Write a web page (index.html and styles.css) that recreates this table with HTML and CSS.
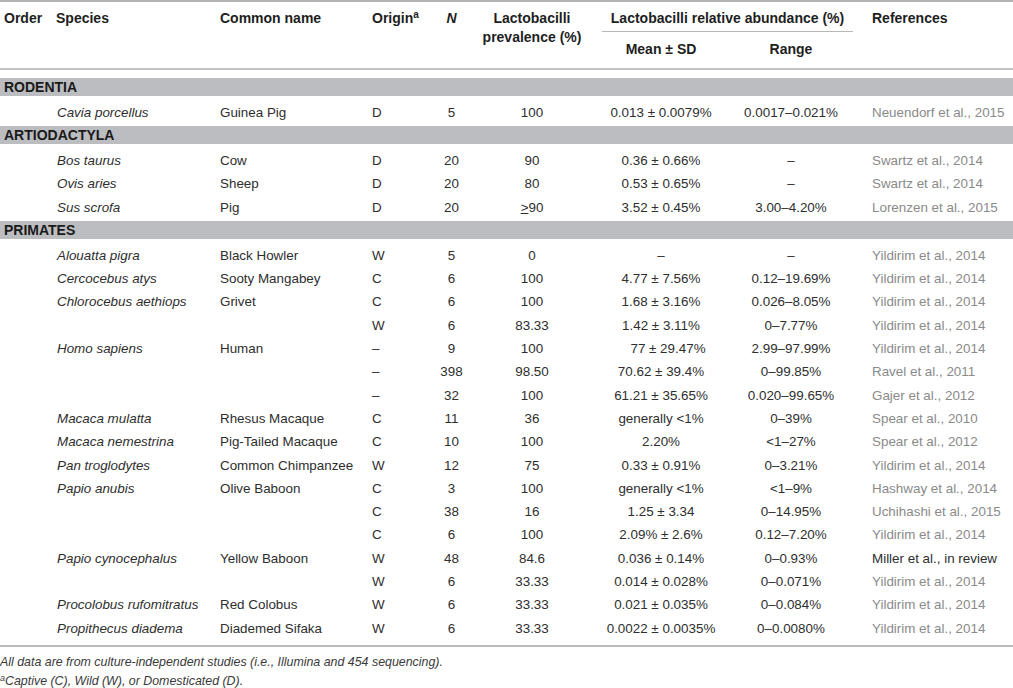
FILE: index.html
```html
<!DOCTYPE html>
<html lang="en">
<head>
<meta charset="utf-8">
<title>Lactobacilli prevalence</title>
<link rel="stylesheet" href="styles.css">
</head>
<body>
<div class="wrap">
<table class="data">
<colgroup>
<col class="c-order"><col class="c-species"><col class="c-common"><col class="c-origin"><col class="c-n"><col class="c-prev"><col class="c-mean"><col class="c-range"><col class="c-ref">
</colgroup>
<thead>
<tr>
<th rowspan="2" class="l top">Order</th>
<th rowspan="2" class="l top">Species</th>
<th rowspan="2" class="l top">Common name</th>
<th rowspan="2" class="l top">Origin<sup>a</sup></th>
<th rowspan="2" class="c top"><i>N</i></th>
<th rowspan="2" class="c top">Lactobacilli<br>prevalence (%)</th>
<th colspan="2" class="grp"><div class="grp-in">Lactobacilli relative abundance (%)</div></th>
<th rowspan="2" class="l top ref-h">References</th>
</tr>
<tr>
<th class="c sub">Mean ± SD</th>
<th class="c sub">Range</th>
</tr>
</thead>
<tbody>
<tr class="sec first"><td colspan="9"><div class="band">RODENTIA</div></td></tr>
<tr><td></td><td class="sp">Cavia porcellus</td><td class="l">Guinea Pig</td><td class="l">D</td><td class="c">5</td><td class="c">100</td><td class="c">0.013 ± 0.0079%</td><td class="c">0.0017–0.021%</td><td class="ref">Neuendorf et al., 2015</td></tr>
<tr class="sec"><td colspan="9"><div class="band">ARTIODACTYLA</div></td></tr>
<tr><td></td><td class="sp">Bos taurus</td><td class="l">Cow</td><td class="l">D</td><td class="c">20</td><td class="c">90</td><td class="c">0.36 ± 0.66%</td><td class="c">–</td><td class="ref">Swartz et al., 2014</td></tr>
<tr><td></td><td class="sp">Ovis aries</td><td class="l">Sheep</td><td class="l">D</td><td class="c">20</td><td class="c">80</td><td class="c">0.53 ± 0.65%</td><td class="c">–</td><td class="ref">Swartz et al., 2014</td></tr>
<tr><td></td><td class="sp">Sus scrofa</td><td class="l">Pig</td><td class="l">D</td><td class="c">20</td><td class="c"><u>&gt;</u>90</td><td class="c">3.52 ± 0.45%</td><td class="c">3.00–4.20%</td><td class="ref">Lorenzen et al., 2015</td></tr>
<tr class="sec"><td colspan="9"><div class="band">PRIMATES</div></td></tr>
<tr><td></td><td class="sp">Alouatta pigra</td><td class="l">Black Howler</td><td class="l">W</td><td class="c">5</td><td class="c">0</td><td class="c">–</td><td class="c">–</td><td class="ref">Yildirim et al., 2014</td></tr>
<tr><td></td><td class="sp">Cercocebus atys</td><td class="l">Sooty Mangabey</td><td class="l">C</td><td class="c">6</td><td class="c">100</td><td class="c">4.77 ± 7.56%</td><td class="c">0.12–19.69%</td><td class="ref">Yildirim et al., 2014</td></tr>
<tr><td></td><td class="sp">Chlorocebus aethiops</td><td class="l">Grivet</td><td class="l">C</td><td class="c">6</td><td class="c">100</td><td class="c">1.68 ± 3.16%</td><td class="c">0.026–8.05%</td><td class="ref">Yildirim et al., 2014</td></tr>
<tr><td></td><td class="sp"></td><td class="l"></td><td class="l">W</td><td class="c">6</td><td class="c">83.33</td><td class="c">1.42 ± 3.11%</td><td class="c">0–7.77%</td><td class="ref">Yildirim et al., 2014</td></tr>
<tr><td></td><td class="sp">Homo sapiens</td><td class="l">Human</td><td class="l">–</td><td class="c">9</td><td class="c">100</td><td class="c shift">77 ± 29.47%</td><td class="c">2.99–97.99%</td><td class="ref">Yildirim et al., 2014</td></tr>
<tr><td></td><td class="sp"></td><td class="l"></td><td class="l">–</td><td class="c">398</td><td class="c">98.50</td><td class="c">70.62 ± 39.4%</td><td class="c">0–99.85%</td><td class="ref">Ravel et al., 2011</td></tr>
<tr><td></td><td class="sp"></td><td class="l"></td><td class="l">–</td><td class="c">32</td><td class="c">100</td><td class="c">61.21 ± 35.65%</td><td class="c">0.020–99.65%</td><td class="ref">Gajer et al., 2012</td></tr>
<tr><td></td><td class="sp">Macaca mulatta</td><td class="l">Rhesus Macaque</td><td class="l">C</td><td class="c">11</td><td class="c">36</td><td class="c">generally &lt;1%</td><td class="c">0–39%</td><td class="ref">Spear et al., 2010</td></tr>
<tr><td></td><td class="sp">Macaca nemestrina</td><td class="l">Pig-Tailed Macaque</td><td class="l">C</td><td class="c">10</td><td class="c">100</td><td class="c">2.20%</td><td class="c">&lt;1–27%</td><td class="ref">Spear et al., 2012</td></tr>
<tr><td></td><td class="sp">Pan troglodytes</td><td class="l">Common Chimpanzee</td><td class="l">W</td><td class="c">12</td><td class="c">75</td><td class="c">0.33 ± 0.91%</td><td class="c">0–3.21%</td><td class="ref">Yildirim et al., 2014</td></tr>
<tr><td></td><td class="sp">Papio anubis</td><td class="l">Olive Baboon</td><td class="l">C</td><td class="c">3</td><td class="c">100</td><td class="c">generally &lt;1%</td><td class="c">&lt;1–9%</td><td class="ref">Hashway et al., 2014</td></tr>
<tr><td></td><td class="sp"></td><td class="l"></td><td class="l">C</td><td class="c">38</td><td class="c">16</td><td class="c">1.25 ± 3.34</td><td class="c">0–14.95%</td><td class="ref">Uchihashi et al., 2015</td></tr>
<tr><td></td><td class="sp"></td><td class="l"></td><td class="l">C</td><td class="c">6</td><td class="c">100</td><td class="c">2.09% ± 2.6%</td><td class="c">0.12–7.20%</td><td class="ref">Yildirim et al., 2014</td></tr>
<tr><td></td><td class="sp">Papio cynocephalus</td><td class="l">Yellow Baboon</td><td class="l">W</td><td class="c">48</td><td class="c">84.6</td><td class="c">0.036 ± 0.14%</td><td class="c">0–0.93%</td><td class="ref dark">Miller et al., in review</td></tr>
<tr><td></td><td class="sp"></td><td class="l"></td><td class="l">W</td><td class="c">6</td><td class="c">33.33</td><td class="c">0.014 ± 0.028%</td><td class="c">0–0.071%</td><td class="ref">Yildirim et al., 2014</td></tr>
<tr><td></td><td class="sp">Procolobus rufomitratus</td><td class="l">Red Colobus</td><td class="l">W</td><td class="c">6</td><td class="c">33.33</td><td class="c">0.021 ± 0.035%</td><td class="c">0–0.084%</td><td class="ref">Yildirim et al., 2014</td></tr>
<tr><td></td><td class="sp">Propithecus diadema</td><td class="l">Diademed Sifaka</td><td class="l">W</td><td class="c">6</td><td class="c">33.33</td><td class="c">0.0022 ± 0.0035%</td><td class="c">0–0.0080%</td><td class="ref">Yildirim et al., 2014</td></tr>
</tbody>
</table>
</div>
<div class="notes">
<p>All data are from culture-independent studies (i.e., Illumina and 454 sequencing).</p>
<p><sup>a</sup>Captive (C), Wild (W), or Domesticated (D).</p>
</div>
</body>
</html>
```

FILE: styles.css
```css
html, body {
  margin: 0;
  padding: 0;
  background: #ffffff;
}
body {
  font-family: "Liberation Sans", Arial, sans-serif;
  color: #2e2e2e;
  width: 1013px;
}
.wrap {
  border-top: 2px solid #b4b4b4;
  border-bottom: 2px solid #bcbcbc;
  padding-bottom: 5px;
}
.data {
  width: 1013px;
  table-layout: fixed;
  border-collapse: separate;
  border-spacing: 0;
  font-size: 13.4px;
}
.c-order { width: 52px; }
.c-species { width: 164px; }
.c-common { width: 152px; }
.c-origin { width: 57px; }
.c-n { width: 53px; }
.c-prev { width: 108px; }
.c-mean { width: 150px; }
.c-range { width: 110px; }
.c-ref { width: 167px; }

.data th {
  font-size: 14px;
  font-weight: bold;
  color: #1e1e1e;
  line-height: 19px;
  padding: 0 0 0 4px;
}
.data th.top {
  vertical-align: top;
  padding-top: 7px;
  border-bottom: 2px solid #c2c2c2;
}
.data th.c { text-align: center; padding-left: 0; }
.data th.l { text-align: left; }
.data th.ref-h { padding-left: 26px; }
.data th sup {
  font-size: 10px;
  line-height: 0;
  vertical-align: 5px;
}
.data th.grp {
  padding: 7px 0 0 16px;
  vertical-align: top;
}
.grp-in {
  text-align: center;
  padding-bottom: 3px;
  border-bottom: 1px solid #b8b8b8;
  margin-right: -7px;
}
.data th.sub {
  padding-top: 8px;
  padding-bottom: 9px;
  border-bottom: 2px solid #c2c2c2;
  vertical-align: top;
}

.data td {
  height: 23.3px;
  padding: 0;
  line-height: 16px;
  vertical-align: middle;
  white-space: nowrap;
}
.data td.l { text-align: left; padding-left: 4px; }
.data td.sp { font-style: italic; padding-left: 5px; }
.data td.c { text-align: center; }
.data td.shift { padding-left: 14px; }
.data td.ref { padding-left: 26px; color: #8a8a8a; }
.data td.ref.dark { color: #2e2e2e; }

.data tr.sec td {
  height: auto;
  padding: 2px 0 5px 0;
}
.data tr.sec.first td { padding-top: 8px; }
.band {
  background: #bcbdc0;
  height: 18px;
  line-height: 18px;
  padding-left: 4px;
  font-size: 14px;
  font-weight: bold;
  color: #1a1a1a;
}

.notes {
  margin-top: 6px;
  font-size: 12.4px;
  font-style: italic;
  color: #3a3a3a;
  line-height: 19px;
}
.notes p { margin: 0; }
.notes sup {
  font-size: 9px;
  line-height: 0;
  vertical-align: 4px;
}
```
